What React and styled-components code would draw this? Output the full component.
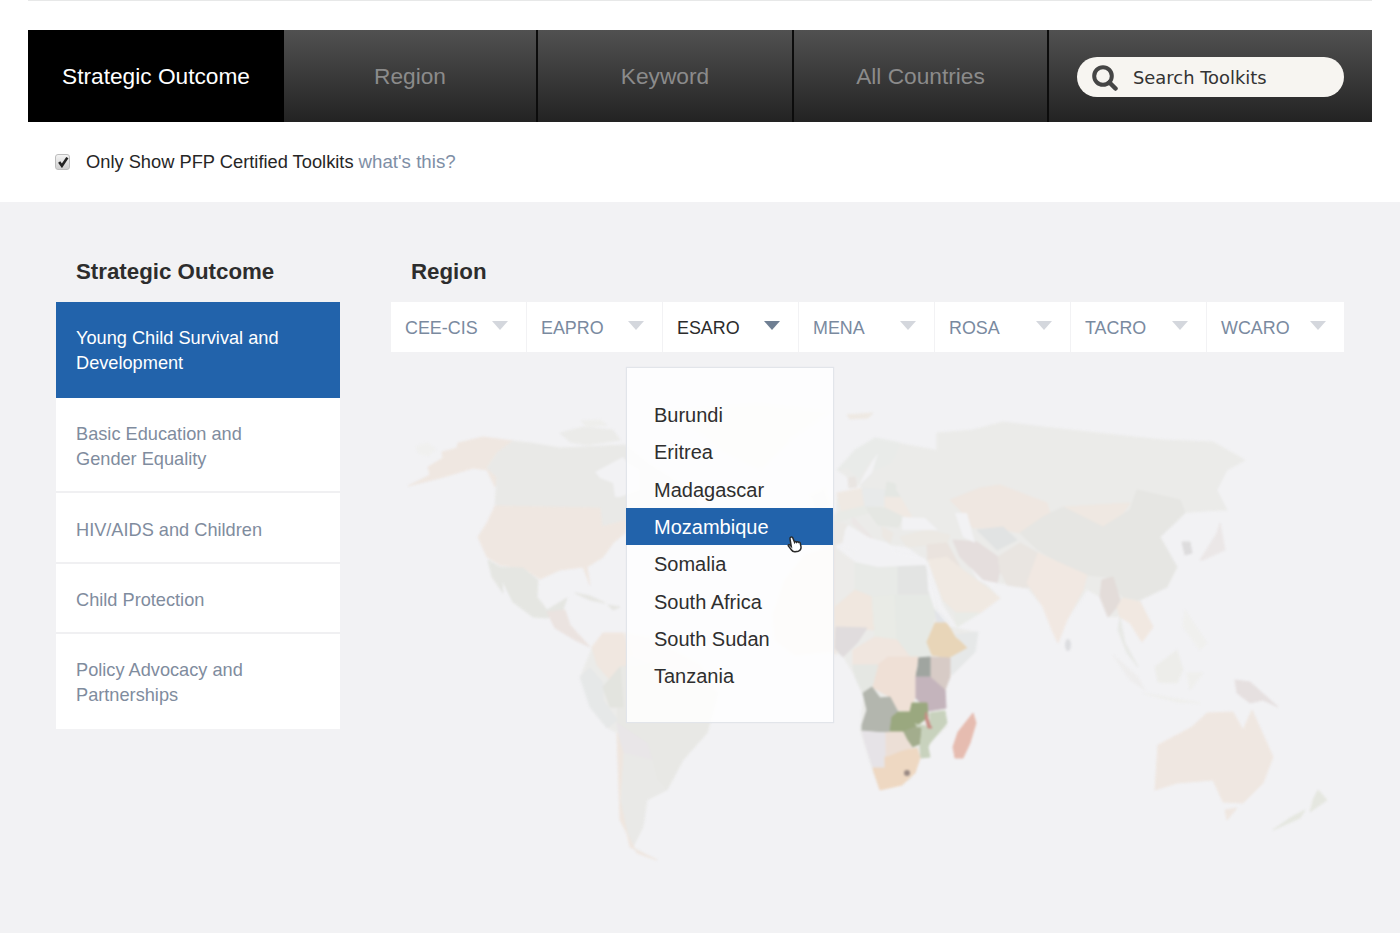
import React from 'react';
import styled, { createGlobalStyle } from 'styled-components';

const GlobalStyle = createGlobalStyle`
    html, body {
        margin: 0;
        padding: 0;
        background: #fff;
    }
    body {
        font-family: "Liberation Sans", Arial, sans-serif;
        color: #2b2b2b;
    }
    * {
        box-sizing: border-box;
    }
`;

const Page = styled.div`
    width: 1400px;
    height: 933px;
    overflow: hidden;
    display: flex;
    flex-direction: column;
`;

const TopArea = styled.header`
    height: 202px;
    padding: 0 28px;
    flex: none;
`;

const TopRule = styled.div`
    height: 30px;
    border-top: 1px solid #e7e8e8;
`;

const NavBar = styled.nav`
    height: 92px;
    display: grid;
    grid-template-columns: 256px 254px 256px 255px 1fr;
    background: linear-gradient(#515151, #232323);
`;

const NavTab = styled.div`
    display: flex;
    align-items: center;
    justify-content: center;
    font-size: 22.7px;
    color: ${props => (props.$active ? '#fff' : '#8b8b8b')};
    background: ${props => (props.$active ? '#000' : 'transparent')};
    border-right: ${props => (props.$active ? '0' : '2px solid #0c0c0c')};
`;

const SearchCell = styled.div`
    display: flex;
    align-items: center;
    padding: 2px 0 0 28px;
`;

const SearchPill = styled.div`
    width: 267px;
    height: 40px;
    border-radius: 20px;
    background: #f7f5f1;
    display: flex;
    align-items: center;
    gap: 15px;
    padding-left: 14px;
    font-family: "DejaVu Sans", Tahoma, sans-serif;
    font-size: 17.9px;
    color: #333;
`;

const FilterRow = styled.div`
    height: 80px;
    display: flex;
    align-items: center;
    padding: 0 0 0 27px;
    font-size: 18.3px;
    color: #262626;
`;

const CheckBox = styled.span`
    width: 15px;
    height: 16px;
    margin-right: 16px;
    border-radius: 3px;
    border: 1px solid #bdbdbd;
    background: linear-gradient(#f4f4f4, #cfcfcf);
    display: flex;
    align-items: center;
    justify-content: center;
`;

const HelpLink = styled.span`
    color: #7e8ea5;
    margin-left: 5px;
    font-size: 18.7px;
`;

const Main = styled.main`
    position: relative;
    flex: 1;
    background: #f2f2f4;
    display: flex;
    gap: 51px;
    padding: 56px 56px 0;
`;

const MapLayer = styled.svg`
    position: absolute;
    left: 0;
    top: 0;
    width: 1400px;
    height: 731px;
    filter: blur(0.9px);
`;

const Column = styled.section`
    position: relative;
    width: ${props => props.$width}px;
`;

const SectionTitle = styled.h2`
    margin: 0 0 16px;
    padding-left: 20px;
    font-size: 22.3px;
    line-height: 28px;
    font-weight: 700;
    color: #2d2d2d;
`;

const OutcomeList = styled.div`
    display: grid;
    grid-template-rows: 96px 95px 71px 70px 95px;
`;

const OutcomeItem = styled.div`
    display: flex;
    align-items: center;
    padding: ${props => (props.$active ? '2px' : '3px')} 40px 0 20px;
    font-size: 18.2px;
    line-height: 25px;
    white-space: pre-line;
    color: ${props => (props.$active ? '#fff' : '#7f8c9e')};
    background: ${props => (props.$active ? '#2263ab' : '#fff')};
    box-shadow: ${props => (props.$active || props.$last ? 'none' : 'inset 0 -2px 0 #f0f0f2')};
`;

const RegionTabs = styled.div`
    display: flex;
    gap: 1px;
    height: 50px;
`;

const RegionTab = styled.div`
    position: relative;
    flex: ${props => (props.$last ? '1' : '0 0 135px')};
    display: flex;
    align-items: center;
    justify-content: space-between;
    padding: 3px 18px 0 14px;
    background: #fff;
    font-size: 17.9px;
    color: ${props => (props.$active ? '#2b2b2b' : '#7a8a9f')};
`;

const Caret = styled.span`
    width: 0;
    height: 0;
    margin-bottom: 7px;
    border-left: 8px solid transparent;
    border-right: 8px solid transparent;
    border-top: 9px solid ${props => (props.$active ? '#6f7f93' : '#d4d7dd')};
`;

const Dropdown = styled.div`
    position: absolute;
    left: -37px;
    top: 65px;
    width: 208px;
    height: 356px;
    padding-top: 28px;
    background: rgba(255, 255, 255, 0.85);
    border: 1px solid #e2e5ea;
    box-shadow: 0 0 1px #dfe2e7;
    z-index: 2;
`;

const DropdownItem = styled.div`
    position: relative;
    height: 37.33px;
    margin-left: -1px;
    padding: 2px 0 0 28px;
    display: flex;
    align-items: center;
    font-size: 20px;
    color: ${props => (props.$active ? '#fff' : '#2f2f2f')};
    background: ${props => (props.$active ? '#2263ab' : 'transparent')};
`;

const HandCursor = styled.svg`
    position: absolute;
    left: 159px;
    top: 27px;
    width: 20px;
    height: 21px;
`;

const outcomes = [
    { label: 'Young Child Survival and\nDevelopment', active: true },
    { label: 'Basic Education and\nGender Equality' },
    { label: 'HIV/AIDS and Children' },
    { label: 'Child Protection' },
    { label: 'Policy Advocacy and\nPartnerships', last: true },
];

const regions = ['CEE-CIS', 'EAPRO', 'ESARO', 'MENA', 'ROSA', 'TACRO', 'WCARO'];

const countries = ['Burundi', 'Eritrea', 'Madagascar', 'Mozambique', 'Somalia', 'South Africa', 'South Sudan', 'Tanzania'];

// continent outlines go first so the country shapes never leave gaps
const continents = [
    '835,546 855,563 878,567 902,563 925,565 933,590 937,610 953,627 977,632 970,650 947,680 945,710 947,727 930,743 920,760 910,780 880,790 873,773 860,730 863,697 855,677 843,657 835,652 795,655 775,640 773,615 785,580 805,555',
    '800,525 836,513 837,493 862,488 848,478 837,470 855,450 875,438 900,443 937,450 937,433 973,430 1003,422 1043,427 1097,433 1163,440 1213,442 1245,460 1227,470 1217,490 1227,510 1185,513 1160,537 1177,567 1167,587 1140,600 1153,627 1142,642 1130,623 1120,617 1108,617 1100,597 1087,590 1067,620 1058,643 1043,607 1027,588 1007,585 997,583 983,580 1000,598 980,613 957,627 943,605 928,562 907,547 888,545 868,537 848,530 835,545 800,545',
    '592,647 603,633 650,638 700,665 718,693 707,733 683,760 667,790 647,800 643,827 633,847 657,860 637,853 620,820 617,733 607,728 590,707 580,677',
];

// country shapes, traced in page coordinates
const land = [
    // north america
    ['#efe7e1', '408,486 430,475 428,467 443,458 442,452 457,448 458,443 483,437 513,441 497,453 487,468 497,477 495,487 487,470 473,468 457,473 440,478'],
    ['#f0f0ef', '416,447 427,443 436,449 428,456 418,453'],
    ['#e9e9e7', '513,441 530,443 560,448 625,445 650,465 690,490 706,520 680,525 627,520 602,527 600,508 495,506 497,477 487,468 497,453'],
    ['#ebebe9', '560,433 583,427 613,430 620,440 587,445 570,442'],
    ['#eeeeec', '581,421 600,420 607,425 587,427'],
    ['#eeeeec', '650,412 700,408 760,404 830,412 790,440 760,470 720,450 690,425'],
    ['#efe7e1', '495,506 600,508 602,527 627,520 625,533 613,543 603,557 587,567 590,585 583,567 560,570 540,579 523,568 500,565 487,557 478,537 487,523'],
    ['#e5e6e2', '488,560 500,567 523,568 538,580 537,597 547,610 567,598 563,610 547,618 533,617 513,602 502,580 503,593 492,577'],
    ['#e6e6e2', '575,593 590,596 605,603 590,600'],
    ['#e6e6e2', '608,605 620,607 613,610'],
    ['#ebe3e0', '547,612 565,610 570,625 590,647 575,640 555,628'],
    // south america
    ['#f0e7e0', '592,647 603,633 623,633 632,650 625,670 610,680 597,665'],
    ['#f0ebe6', '623,633 650,638 700,665 718,693 660,668 632,655'],
    ['#e8e8e5', '620,667 653,663 718,693 707,733 683,760 667,790 657,780 647,743 617,723'],
    ['#e6e8e8', '580,677 590,668 603,683 603,700 617,720 607,728 590,707'],
    ['#e3e4df', '603,687 620,667 623,707 610,707'],
    ['#e9e6e8', '617,723 647,743 652,760 623,753'],
    ['#e9e9e7', '623,753 652,760 657,780 667,790 647,800 643,827 633,847 622,813'],
    ['#efe6df', '617,733 623,753 620,800 630,847 657,860 637,853 620,820'],
    // europe
    ['#eee9e3', '847,415 873,413 868,418 850,419'],
    ['#e9ebe9', '837,470 855,450 875,438 900,443 892,462 875,470 872,457 858,478 848,467'],
    ['#e9e5e2', '848,478 855,477 857,487 849,488'],
    ['#efe9e3', '837,493 862,488 865,505 862,510 842,513'],
    ['#ececea', '810,495 825,488 830,505 815,515'],
    ['#e8eaea', '862,488 885,490 885,505 865,507'],
    ['#e4e7e3', '887,482 907,487 903,497 885,497'],
    ['#f0e9e3', '885,497 915,498 928,510 908,518 885,508'],
    ['#e5e7e3', '865,507 885,508 903,517 898,527 878,525'],
    ['#e8eae6', '836,513 865,506 868,513 853,517 836,522'],
    ['#ebe7e6', '853,517 868,533 880,545 868,537 852,523'],
    ['#ebe9e6', '800,525 835,522 847,525 843,542 830,548 800,545'],
    ['#ece8e3', '882,527 893,533 890,543 883,537'],
    // africa
    ['#eee8e3', '835,546 805,555 785,580 773,615 775,640 795,655 830,650 836,655'],
    ['#ecebe9', '835,548 855,562 855,590 835,607'],
    ['#e8eae7', '855,562 898,565 898,597 870,597 855,590'],
    ['#e3e4e3', '898,565 925,565 933,595 898,597'],
    ['#f0e7df', '835,607 855,590 872,597 875,630 836,627'],
    ['#e9ebe6', '872,597 895,595 897,640 887,643 875,637'],
    ['#e6e9e5', '895,595 933,595 937,610 927,640 930,657 910,657 897,640'],
    ['#e0dcdd', '836,627 867,628 857,643 843,657 835,648'],
    ['#f0e6df', '853,650 875,637 897,640 910,657 888,657 878,665 853,665'],
    ['#e2e4e8', '935,610 940,613 953,627 941,622 937,623'],
    ['#e8d5b8', '935,623 947,623 955,637 968,648 950,658 932,655 927,642'],
    ['#e6e8e8', '955,635 978,632 975,652 952,675 950,658 968,648'],
    ['#d7cbc6', '930,657 950,658 950,677 945,690 930,677'],
    ['#a0a5a0', '918,658 930,657 930,677 915,677 918,667'],
    ['#c4b4bc', '915,677 930,677 945,690 946,708 928,711 915,697'],
    ['#efe0d6', '888,657 918,657 915,677 915,697 910,712 898,710 890,697 872,687 873,680 878,665'],
    ['#e5e7e3', '853,665 878,665 872,687 863,693 855,677'],
    ['#b3b6ae', '863,693 872,687 880,698 890,697 898,712 892,717 890,732 862,731 862,725 867,710'],
    ['#9aa87f', '912,703 927,703 928,717 915,727 903,732 890,732 892,717 898,712 910,712'],
    ['#a3ad8d', '903,732 915,727 922,728 922,743 912,747 907,740'],
    ['#c8d2bd', '930,713 945,711 947,723 930,743 928,747 930,757 921,758 920,747 922,728 915,724 930,727'],
    ['#c88e86', '926,712 930,725 932,728 928,728 925,717'],
    ['#ecdfd6', '885,733 890,732 903,732 907,740 912,747 907,750 900,752 888,757 885,757'],
    ['#e6e3e7', '862,731 885,733 885,768 873,768 865,743'],
    ['#eed8c2', '885,768 885,757 888,757 900,752 907,750 917,748 920,758 915,773 902,785 880,790 874,772 873,768'],
    ['#e6bcb0', '973,713 976,723 970,743 963,758 955,758 953,747 958,732'],
    // middle east and asia
    ['#ebebe9', '892,460 937,450 937,433 973,430 1003,422 1043,427 1097,433 1163,440 1213,442 1245,460 1227,470 1217,490 1227,510 1207,510 1185,510 1180,500 1137,490 1130,510 1103,527 1063,507 1047,503 1000,485 980,488 950,500 963,513 953,518 930,527 913,517 897,490'],
    ['#efe7e1', '950,500 980,488 1000,485 1047,503 1050,513 1020,533 997,528 973,528 963,513'],
    ['#efe8e2', '1063,507 1130,503 1113,528 1083,525'],
    ['#e6e6e3', '1043,517 1063,507 1103,527 1130,510 1137,490 1180,500 1185,513 1160,537 1177,567 1167,587 1140,600 1123,597 1107,577 1087,575 1060,563 1038,550 1020,533'],
    ['#ece9e4', '900,537 927,530 950,535 947,543 927,545 907,547'],
    ['#eae3de', '927,545 947,543 960,567 947,560 928,560'],
    ['#f0e9e2', '928,560 947,557 967,573 990,590 1000,598 980,613 957,613 943,600'],
    ['#e9ebe7', '955,613 980,613 957,627'],
    ['#e5dedd', '953,540 977,542 998,557 1000,570 997,583 983,580 970,567 960,557'],
    ['#e1e3e3', '977,530 1003,527 1017,540 997,550'],
    ['#e9e5e1', '998,557 1020,543 1038,553 1033,577 1027,588 1007,585 1000,570'],
    ['#f1e8e2', '1038,553 1060,563 1087,575 1083,590 1067,620 1058,643 1052,630 1043,607 1027,583'],
    ['#e3dcd9', '1102,580 1113,577 1120,600 1117,607 1108,617 1100,597'],
    ['#f1e8e1', '1117,607 1123,598 1140,602 1153,627 1142,642 1130,623 1120,617'],
    ['#e8e9e6', '1120,617 1125,643 1138,667 1127,653 1118,630'],
    ['#eeeded', '1113,655 1138,677 1145,690 1130,680'],
    ['#efefed', '1143,693 1200,703 1177,702'],
    ['#ededea', '1155,667 1177,650 1183,670 1177,683 1158,682'],
    ['#f0f0ee', '1185,610 1207,643 1200,650 1183,627'],
    ['#efefed', '1187,673 1203,673 1190,690'],
    ['#ebe7e7', '1200,560 1217,533 1220,523 1225,550 1203,560'],
    ['#dddcdd', '1182,542 1190,542 1192,553 1185,555'],
    // oceania
    ['#e6e0e0', '1235,680 1250,682 1278,707 1263,700 1250,703 1237,693'],
    ['#efe7e1', '1158,745 1192,727 1207,713 1233,712 1243,730 1252,710 1273,757 1263,783 1243,803 1223,802 1213,780 1177,783 1155,790'],
    ['#efe7e1', '1225,810 1237,808 1227,820'],
    ['#e5e7e0', '1318,790 1327,800 1310,812 1313,800'],
    ['#e5e7e0', '1305,810 1300,818 1273,830 1290,818'],
];

// seas that cut into the shapes above
const water = [
    '595,472 623,457 628,463 640,470 640,490 620,497 615,497 613,483 600,478',
    '902,517 925,518 938,530 902,530',
    '955,513 967,513 975,543 963,537',
    '878,453 872,473 858,487 865,473 873,460',
    '848,525 868,537 888,543 897,553 925,558 925,565 878,567 855,562 855,550 842,547 845,530',
    '970,567 983,580 997,583 993,588 978,580',
    '927,570 933,590 937,610 953,627 950,627 934,608 928,590',
];

const WorldMap = () => (
    <MapLayer viewBox="0 202 1400 731">
        {continents.map(points => (
            <polygon key={points} fill="#ebebe9" points={points} />
        ))}
        {land.map(([fill, points]) => (
            <polygon key={points} fill={fill} stroke={fill} strokeLinejoin="round" points={points} />
        ))}
        {water.map(points => (
            <polygon key={points} fill="#f2f2f4" points={points} />
        ))}
        <ellipse cx="1068" cy="645" rx="3" ry="6" fill="#dcdde0" />
        <circle cx="907" cy="773" r="3" fill="#9a8a84" />
    </MapLayer>
);

const App = () => (
    <Page>
        <GlobalStyle />
        <TopArea>
            <TopRule />
            <NavBar>
                <NavTab $active>Strategic Outcome</NavTab>
                <NavTab>Region</NavTab>
                <NavTab>Keyword</NavTab>
                <NavTab>All Countries</NavTab>
                <SearchCell>
                    <SearchPill>
                        <svg width="27" height="27" viewBox="0 0 27 27" fill="none" stroke="#454545">
                            <circle cx="12" cy="12" r="8.8" strokeWidth="4" />
                            <path d="M18.5 18.5 L24.5 24.5" strokeWidth="4.5" strokeLinecap="round" />
                        </svg>
                        Search Toolkits
                    </SearchPill>
                </SearchCell>
            </NavBar>
            <FilterRow>
                <CheckBox>
                    <svg width="12" height="12" viewBox="0 0 11 11" fill="none" stroke="#222" strokeWidth="2.4">
                        <path d="M2 5.5 L4.5 9 L9.5 1.5" />
                    </svg>
                </CheckBox>
                Only Show PFP Certified Toolkits
                <HelpLink>what's this?</HelpLink>
            </FilterRow>
        </TopArea>
        <Main>
            <WorldMap />
            <Column $width={284}>
                <SectionTitle>Strategic Outcome</SectionTitle>
                <OutcomeList>
                    {outcomes.map(item => (
                        <OutcomeItem key={item.label} $active={item.active} $last={item.last}>
                            <span>{item.label}</span>
                        </OutcomeItem>
                    ))}
                </OutcomeList>
            </Column>
            <Column $width={953}>
                <SectionTitle>Region</SectionTitle>
                <RegionTabs>
                    {regions.map(name => (
                        <RegionTab key={name} $active={name === 'ESARO'} $last={name === 'WCARO'}>
                            {name}
                            <Caret $active={name === 'ESARO'} />
                            {name === 'ESARO' && (
                                <Dropdown>
                                    {countries.map(country => (
                                        <DropdownItem key={country} $active={country === 'Mozambique'}>
                                            {country}
                                            {country === 'Mozambique' && (
                                                <HandCursor viewBox="0 0 24 24" fill="#fff" stroke="#2a2a2a" strokeWidth="1.8">
                                                    <path d="M7 2c1-.6 2 0 2.4 1L11.5 8c.4-1 1.8-1 2.3 0 .5-.9 1.8-.8 2.3.2.6-.6 1.7-.3 2 .6l1 4c.5 2.4-.5 5-3 6l-4 .8c-2 .2-3.5-.8-4.5-2.5L4 12.5c-.6-1 .6-2.2 1.8-1.2L7.5 13 6 4C5.8 3 6.2 2.4 7 2z" />
                                                </HandCursor>
                                            )}
                                        </DropdownItem>
                                    ))}
                                </Dropdown>
                            )}
                        </RegionTab>
                    ))}
                </RegionTabs>
            </Column>
        </Main>
    </Page>
);

export default App;
